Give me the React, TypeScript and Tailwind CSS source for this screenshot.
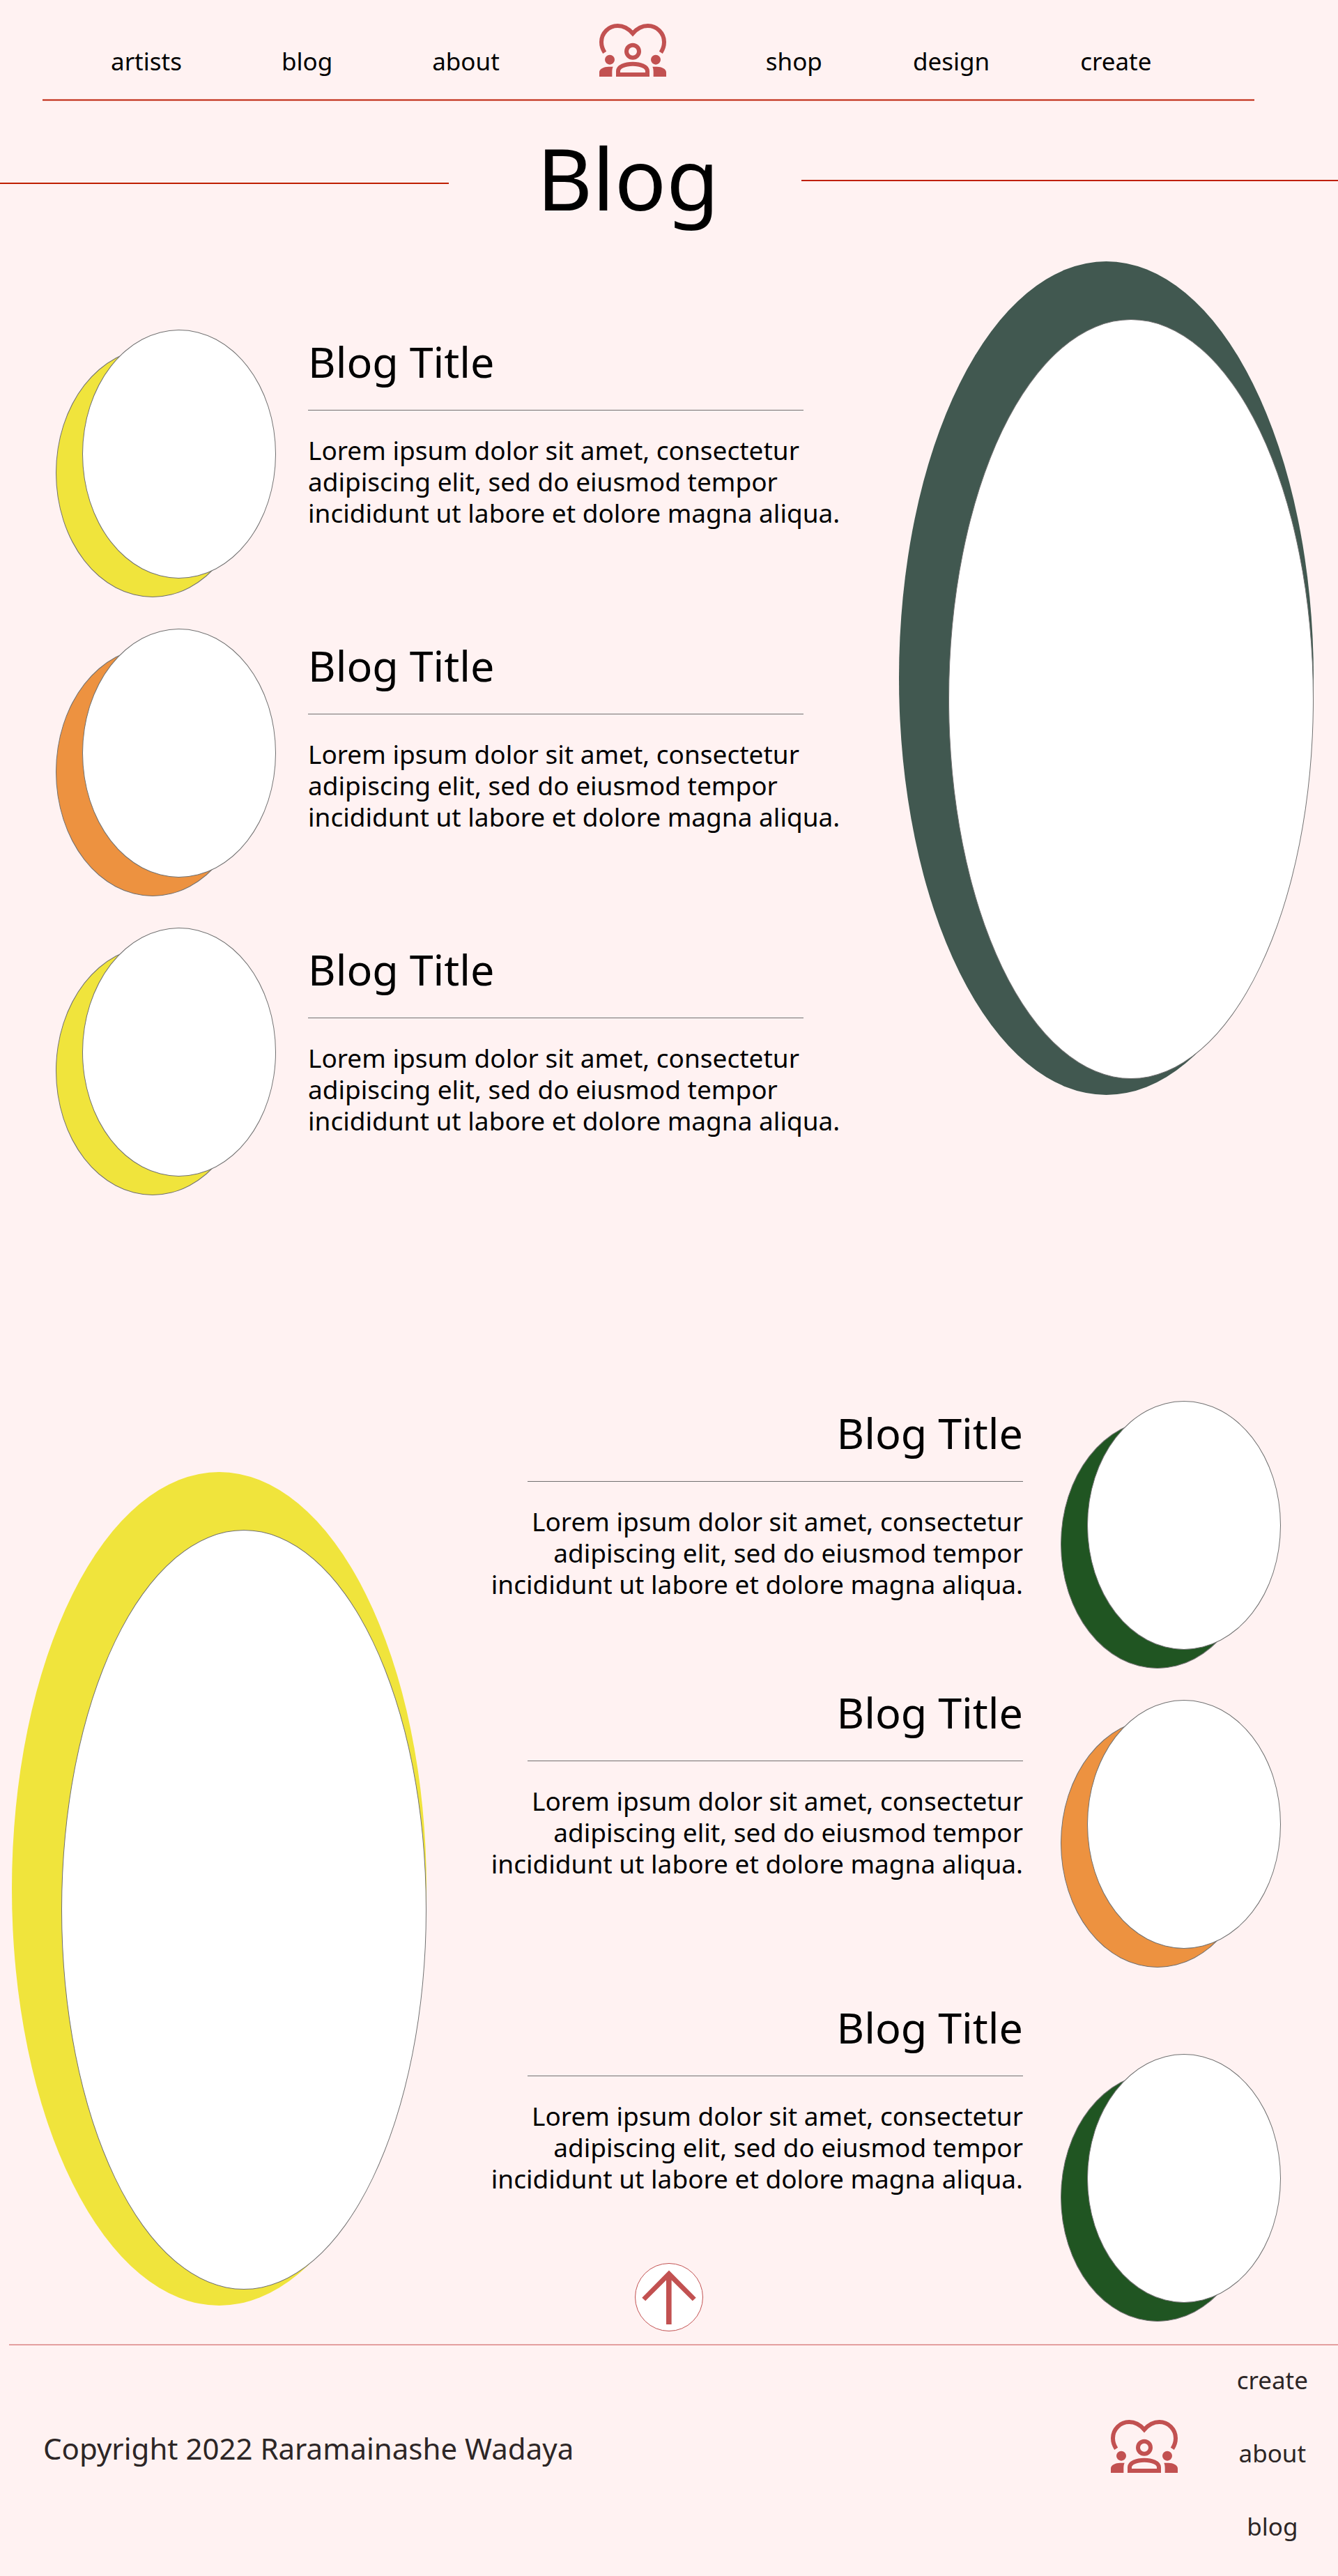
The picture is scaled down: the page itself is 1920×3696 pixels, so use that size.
const EXCERPT =
  "Lorem ipsum dolor sit amet, consectetur adipiscing elit, sed do eiusmod tempor incididunt ut labore et dolore magna aliqua.";

function Logo() {
  return (
    <svg viewBox="0 0 288 228" className="h-[76px] w-24" fill="#c25151" aria-hidden="true">
      <g fill="none" stroke="#c25151" strokeWidth="18">
        <path d="M23 124C13 109 9 95 9 79A70 70 0 0 1 79 9C104 9 125 20 144 42C163 20 184 9 209 9A70 70 0 0 1 279 79C279 95 275 109 265 124" />
        <circle cx="144" cy="119" r="27" />
        <path d="M81 219V204C81 185 110 173 144 173S207 185 207 204V219Z" />
      </g>
      <circle cx="45" cy="155" r="21" />
      <circle cx="243" cy="155" r="21" />
      <path d="M0 228V209C0 194 20 185 40 185H59C56 191 55 200 55 208V228Z" />
      <path d="M288 228V209C288 194 268 185 248 185H229C232 191 233 200 233 208V228Z" />
    </svg>
  );
}

function NavLink({ label }: { label: string }) {
  return (
    <a href={`#${label}`} className="block text-[35px] leading-[44px] hover:underline">
      {label}
    </a>
  );
}

function Disc({ color }: { color: string }) {
  return (
    <div className="relative h-96 w-[316px] shrink-0">
      <div className={`absolute bottom-0 left-0 h-[357px] w-[278px] rounded-[50%] border border-[#707070] ${color}`} />
      <div className="absolute top-0 right-0 h-[357px] w-[278px] rounded-[50%] border border-[#707070] bg-white" />
    </div>
  );
}

function Feature({ color }: { color: string }) {
  return (
    <div className={`relative h-[1196px] w-[595px] shrink-0 rounded-[50%] ${color}`}>
      <div className="absolute top-[83px] right-0 h-[1090px] w-[524px] rounded-[50%] border border-[#707070] bg-white" />
    </div>
  );
}

function Post({ right = false }: { right?: boolean }) {
  return (
    <article className={right ? "flex flex-col items-end text-right" : "flex flex-col items-start"}>
      <h2 className="text-[61px] leading-[80px]">Blog Title</h2>
      <hr className="mt-[29px] w-[711px] border-t border-[#707070]" />
      <p className="mt-[34px] w-[770px] text-[37px] leading-[45px]">{EXCERPT}</p>
    </article>
  );
}

export default function App() {
  return (
    <div id="top" className="min-h-screen bg-[#fff2f2] font-['Noto_Sans',sans-serif] text-black">
      <header className="mr-[120px] ml-[61px] pt-[34px]">
        <nav className="flex items-end gap-[143px] pb-8 pl-[98px]">
          <NavLink label="artists" />
          <NavLink label="blog" />
          <NavLink label="about" />
          <a href="#home" aria-label="Home">
            <Logo />
          </a>
          <div className="flex gap-[130px]">
            <NavLink label="shop" />
            <NavLink label="design" />
            <NavLink label="create" />
          </div>
        </nav>
        <div className="h-[3px] border-y border-[#e0897a] bg-[#b91c0a]" />
      </header>

      <div className="grid grid-cols-[644fr_506fr_770fr] pt-10">
        <div className="mt-[77px] h-0.5 bg-[#bf1f00]" />
        <h1 className="pl-2 text-center text-[123px] leading-[140px]">Blog</h1>
        <div className="mt-[73px] h-0.5 bg-[#bf1f00]" />
      </div>

      <main>
        <section className="flex items-start pt-[50px] pr-[35px] pl-20">
          <div className="mt-[98px] flex flex-col gap-[45px]">
            <Disc color="bg-[#f0e43c]" />
            <Disc color="bg-[#ed9240]" />
            <Disc color="bg-[#f0e43c]" />
          </div>
          <div className="mt-[104px] ml-[46px] flex flex-col gap-[157px]">
            <Post />
            <Post />
            <Post />
          </div>
          <div className="ml-auto">
            <Feature color="bg-[#415850]" />
          </div>
        </section>

        <section className="flex items-start pt-[295px] pr-[82px] pl-[17px]">
          <div className="mt-[102px]">
            <Feature color="bg-[#f0e43c]" />
          </div>
          <div className="mt-1.5 ml-auto">
            <Post right />
            <div className="mt-[122px]">
              <Post right />
            </div>
            <div className="mt-[173px]">
              <Post right />
            </div>
          </div>
          <div className="ml-[54px]">
            <Disc color="bg-[#205522]" />
            <div className="mt-[45px]">
              <Disc color="bg-[#ed9240]" />
            </div>
            <div className="mt-[124px]">
              <Disc color="bg-[#205522]" />
            </div>
          </div>
        </section>
      </main>

      <a
        href="#top"
        aria-label="Back to top"
        className="mx-auto -mt-[84px] block size-[98px] rounded-full border border-[#c25151] bg-white"
      >
        <svg viewBox="1 1 290 290" className="size-full" fill="#c25151" aria-hidden="true">
          <path d="M146 30L263 148L248 162L157 72V264H134V72L44 162L29 148Z" />
        </svg>
      </a>

      <footer className="mt-[18px] ml-[13px] text-[#2d2626]">
        <div className="h-0.5 border-t border-[#efc4c4] bg-[#d97b7b]" />
        <div className="flex items-start pt-7 pr-[43px] pb-12 pl-[49px]">
          <p className="mt-[92px] text-[42px] leading-[56px]">Copyright 2022 Raramainashe Wadaya</p>
          <a href="#home" aria-label="Home" className="mt-[79px] ml-auto">
            <Logo />
          </a>
          <nav className="ml-[85px] flex flex-col items-center gap-[61px]">
            <NavLink label="create" />
            <NavLink label="about" />
            <NavLink label="blog" />
          </nav>
        </div>
      </footer>
    </div>
  );
}
